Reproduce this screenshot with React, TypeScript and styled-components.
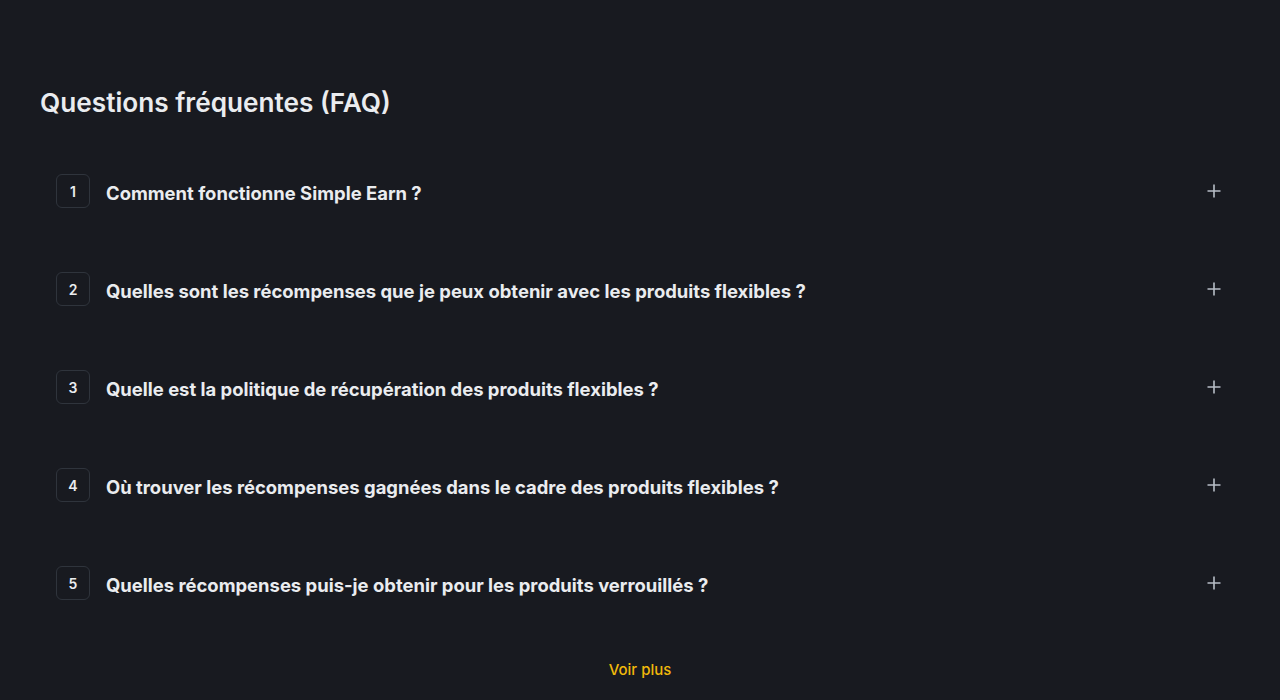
import { useState } from 'react';
import styled, { createGlobalStyle } from 'styled-components';

const questions = [
  'Comment fonctionne Simple Earn ?',
  'Quelles sont les récompenses que je peux obtenir avec les produits flexibles ?',
  'Quelle est la politique de récupération des produits flexibles ?',
  'Où trouver les récompenses gagnées dans le cadre des produits flexibles ?',
  'Quelles récompenses puis-je obtenir pour les produits verrouillés ?',
];

const PlusIcon = () => (
  <svg width="16" height="16" viewBox="0 0 16 16" fill="none">
    <path d="M8 1.5v13M1.5 8h13" stroke="currentColor" strokeWidth="1.6" />
  </svg>
);

export default function App() {
  const [open, setOpen] = useState<number | null>(null);

  return (
    <>
      <GlobalStyle />
      <Page>
        <Title>Questions fréquentes (FAQ)</Title>
        <List>
          {questions.map((q, i) => (
            <Row key={i} onClick={() => setOpen(open === i ? null : i)}>
              <NumBox>{i + 1}</NumBox>
              <Question>{q}</Question>
              <Toggle>
                <PlusIcon />
              </Toggle>
            </Row>
          ))}
        </List>
        <MoreRow>
          <MoreLink href="#">Voir plus</MoreLink>
        </MoreRow>
      </Page>
    </>
  );
}

const GlobalStyle = createGlobalStyle`
  html, body {
    margin: 0;
    background: #181a20;
  }
  body {
    font-family: Inter, "Noto Sans", sans-serif;
    color: #eaecef;
  }
`;

const Page = styled.div`
  height: 700px;
  box-sizing: border-box;
  padding: 86px 40px 0;
  background: #181a20;
  overflow: hidden;
`;

const Title = styled.h2`
  margin: 0;
  font-size: 26.2px;
  line-height: 34px;
  font-weight: 600;
  color: #eaecef;
`;

const List = styled.div`
  margin-top: 22px;
  display: flex;
  flex-direction: column;
`;

const Row = styled.div`
  display: flex;
  align-items: center;
  gap: 16px;
  padding: 32px 18px 32px 16px;
  cursor: pointer;
`;

const NumBox = styled.div`
  flex: none;
  width: 34px;
  height: 34px;
  box-sizing: border-box;
  border: 1px solid #2f343c;
  border-radius: 6px;
  display: flex;
  align-items: center;
  justify-content: center;
  font-size: 14px;
  font-weight: 600;
  color: #eaecef;
`;

const Question = styled.div`
  flex: 1;
  font-size: 18.45px;
  line-height: 26px;
  font-weight: 700;
  color: #eaecef;
  padding-top: 4px;
`;

const Toggle = styled.div`
  flex: none;
  width: 16px;
  height: 16px;
  color: #b7bdc6;
  display: flex;
`;

const MoreRow = styled.div`
  display: flex;
  justify-content: center;
  margin-top: 26px;
`;

const MoreLink = styled.a`
  font-size: 15px;
  line-height: 24px;
  font-weight: 500;
  color: #f0b90b;
  text-decoration: none;
`;
